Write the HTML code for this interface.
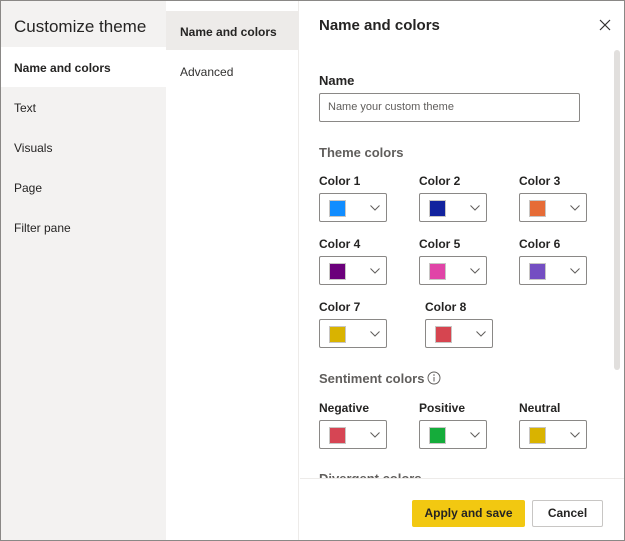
<!DOCTYPE html><html><head><style>
*{margin:0;padding:0;box-sizing:border-box}
body{width:625px;height:541px;font-family:"Liberation Sans",sans-serif;color:#252423;position:relative;overflow:hidden;background:#fff}
.frame{position:absolute;left:0;top:0;width:625px;height:541px;border:1px solid #8a8886}
.left{position:absolute;left:1px;top:1px;width:165px;height:539px;background:#f3f2f1}
.mid{position:absolute;left:166px;top:1px;width:133px;height:539px;background:#fff;border-right:1px solid #edebe9}
.a{position:absolute;font-size:12px;white-space:nowrap}
.lab{position:absolute;font-size:12px;color:#252423;font-weight:600;white-space:nowrap}
.box{position:absolute;width:68px;height:29px;border:1px solid #8a8886;border-radius:2px;background:#fff}
.box i{position:absolute;left:9px;top:6px;width:17px;height:17px;border:1px solid #c8c6c4}
.box svg{position:absolute;left:50px;top:11px}
.sec{position:absolute;font-size:13px;color:#605e5c;font-weight:600;white-space:nowrap}
</style></head><body>
<div class="left"></div>
<div style="position:absolute;left:1px;top:47px;width:165px;height:40px;background:#fff"></div>
<div class="a" style="left:14px;top:17px;font-size:17px">Customize theme</div>
<div class="a" style="left:14px;top:61px;font-weight:600">Name and colors</div>
<div class="a" style="left:14px;top:101px">Text</div>
<div class="a" style="left:14px;top:141px">Visuals</div>
<div class="a" style="left:14px;top:181px">Page</div>
<div class="a" style="left:14px;top:221px">Filter pane</div>
<div class="mid"></div>
<div style="position:absolute;left:166px;top:11px;width:133px;height:39px;background:#edebe9"></div>
<div class="a" style="left:180px;top:25px;font-weight:600">Name and colors</div>
<div class="a" style="left:180px;top:65px;color:#323130">Advanced</div>

<div class="a" style="left:319px;top:17px;font-size:15px;font-weight:600">Name and colors</div>
<svg style="position:absolute;left:599px;top:19px" width="12" height="12"><path d="M1 1L11 11M11 1L1 11" stroke="#323130" stroke-width="1.2"/></svg>
<div style="position:absolute;left:614px;top:50px;width:6px;height:320px;background:#e1dfdd;border-radius:3px"></div>
<div class="lab" style="left:319px;top:73px;font-size:13px">Name</div>
<div style="position:absolute;left:319px;top:93px;width:261px;height:29px;border:1px solid #8a8886;border-radius:2px"></div>
<div class="a" style="left:328px;top:101px;font-size:11px;color:#605e5c">Name your custom theme</div>
<div class="sec" style="left:319px;top:145px">Theme colors</div>

<div class="lab" style="left:319px;top:174px">Color 1</div><div class="box" style="left:319px;top:193px"><i style="background:#118dff"></i><svg width="10" height="6"><path d="M.5 .5L5 5L9.5 .5" fill="none" stroke="#605e5c"/></svg></div>
<div class="lab" style="left:419px;top:174px">Color 2</div><div class="box" style="left:419px;top:193px"><i style="background:#12239e"></i><svg width="10" height="6"><path d="M.5 .5L5 5L9.5 .5" fill="none" stroke="#605e5c"/></svg></div>
<div class="lab" style="left:519px;top:174px">Color 3</div><div class="box" style="left:519px;top:193px"><i style="background:#e66c37"></i><svg width="10" height="6"><path d="M.5 .5L5 5L9.5 .5" fill="none" stroke="#605e5c"/></svg></div>
<div class="lab" style="left:319px;top:237px">Color 4</div><div class="box" style="left:319px;top:256px"><i style="background:#6b007b"></i><svg width="10" height="6"><path d="M.5 .5L5 5L9.5 .5" fill="none" stroke="#605e5c"/></svg></div>
<div class="lab" style="left:419px;top:237px">Color 5</div><div class="box" style="left:419px;top:256px"><i style="background:#e044a7"></i><svg width="10" height="6"><path d="M.5 .5L5 5L9.5 .5" fill="none" stroke="#605e5c"/></svg></div>
<div class="lab" style="left:519px;top:237px">Color 6</div><div class="box" style="left:519px;top:256px"><i style="background:#744ec2"></i><svg width="10" height="6"><path d="M.5 .5L5 5L9.5 .5" fill="none" stroke="#605e5c"/></svg></div>
<div class="lab" style="left:319px;top:300px">Color 7</div><div class="box" style="left:319px;top:319px"><i style="background:#d9b300"></i><svg width="10" height="6"><path d="M.5 .5L5 5L9.5 .5" fill="none" stroke="#605e5c"/></svg></div>
<div class="lab" style="left:425px;top:300px">Color 8</div><div class="box" style="left:425px;top:319px"><i style="background:#d64550"></i><svg width="10" height="6"><path d="M.5 .5L5 5L9.5 .5" fill="none" stroke="#605e5c"/></svg></div>

<div class="sec" style="left:319px;top:371px">Sentiment colors</div>
<svg style="position:absolute;left:427px;top:371px" width="14" height="14"><circle cx="7" cy="7" r="6" fill="none" stroke="#605e5c"/><path d="M7 6V10.5" stroke="#605e5c"/><circle cx="7" cy="4" r=".8" fill="#605e5c"/></svg>
<div class="lab" style="left:319px;top:401px">Negative</div><div class="box" style="left:319px;top:420px"><i style="background:#d64554"></i><svg width="10" height="6"><path d="M.5 .5L5 5L9.5 .5" fill="none" stroke="#605e5c"/></svg></div>
<div class="lab" style="left:419px;top:401px">Positive</div><div class="box" style="left:419px;top:420px"><i style="background:#15ac3b"></i><svg width="10" height="6"><path d="M.5 .5L5 5L9.5 .5" fill="none" stroke="#605e5c"/></svg></div>
<div class="lab" style="left:519px;top:401px">Neutral</div><div class="box" style="left:519px;top:420px"><i style="background:#d9b300"></i><svg width="10" height="6"><path d="M.5 .5L5 5L9.5 .5" fill="none" stroke="#605e5c"/></svg></div>
<div class="sec" style="left:319px;top:471px">Divergent colors</div>

<div style="position:absolute;left:300px;top:478px;width:324px;height:62px;background:#fff;border-top:1px solid #edebe9"></div>
<div style="position:absolute;left:412px;top:500px;width:113px;height:27px;background:#f2c811;border-radius:2px;font-size:12px;font-weight:600;text-align:center;line-height:27px">Apply and save</div>
<div style="position:absolute;left:532px;top:500px;width:71px;height:27px;border:1px solid #c8c6c4;border-radius:2px;font-size:12px;font-weight:600;text-align:center;line-height:25px">Cancel</div>
<div class="frame"></div>
</body></html>
